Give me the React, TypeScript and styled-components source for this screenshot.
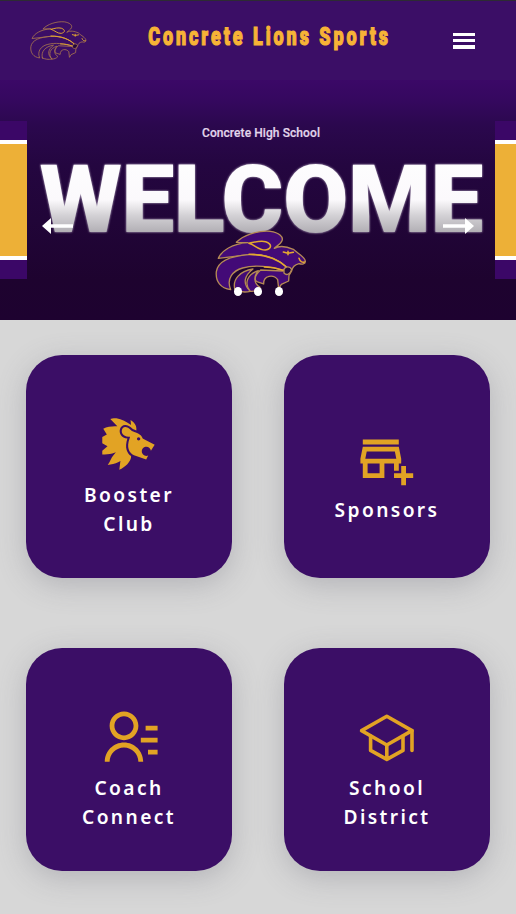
import React from "react";
import styled, { createGlobalStyle } from "styled-components";
import { GiLion } from "react-icons/gi";
import { MdOutlineAddBusiness } from "react-icons/md";
import { RiContactsLine } from "react-icons/ri";
import { IoSchoolOutline } from "react-icons/io5";
import type { IconType } from "react-icons";

const GlobalStyle = createGlobalStyle`
  *, *::before, *::after { box-sizing: border-box; }
  body { margin: 0; background: #d7d7d7; }
`;

const Page = styled.div`
  height: 914px;
  overflow: hidden;
  background: #d7d7d7;
  font-family: "Noto Sans", sans-serif;
`;

const Header = styled.header`
  display: grid;
  grid-template-columns: 117px minmax(0, 1fr) 106px;
  height: 80px;
  border-top: 1px solid #2d2b33;
  background: #3b0e66;
`;

const LogoSlot = styled.a`
  padding: 20px 0 0 30px;
`;

const TitleSlot = styled.div`
  display: flex;
  justify-content: center;
  padding-top: 17px;
`;

const Title = styled.h1`
  margin: 0;
  font: 900 26.5px/36px Roboto, sans-serif;
  letter-spacing: 4.3px;
  white-space: nowrap;
  color: #f7b336;
  -webkit-text-stroke: 1.2px #f7b336;
  transform: translateX(6px) scaleX(0.68);
`;

const MenuButton = styled.button`
  align-self: start;
  display: flex;
  flex-direction: column;
  gap: 3px;
  width: 22px;
  margin: 32px 0 0 42.5px;
  padding: 0;
  border: 0;
  background: none;
`;

const MenuBar = styled.span`
  width: 22px;
  height: 3.2px;
  background: #fff;
`;

const Hero = styled.section`
  position: relative;
  display: grid;
  grid-template-columns: 27px minmax(0, 1fr) 21px;
  height: 240px;
  background: linear-gradient(#3b0867 0, #35085f 20px, #2b084e 45px, #240640 85px, #210538 140px, #1e032f 200px, #1e0230 100%);
`;

const Ribbon = styled.div`
  height: 158px;
  margin-top: 41px;
  border: solid #3b0767;
  border-width: 19px 0;
  background: #edb037;
  box-shadow: inset 0 4px #fff, inset 0 -4px #fff;
`;

const Banner = styled.div`
  display: flex;
  flex-direction: column;
  align-items: center;
  padding-top: 44px;
`;

const SchoolName = styled.p`
  margin: 0;
  font: 500 12px/18px Roboto, sans-serif;
  letter-spacing: 0.08px;
  color: #e2d6eb;
  -webkit-text-stroke: 0.2px #e2d6eb;
`;

const Welcome = styled.h2`
  margin: 2px 0 0;
  font: 900 95px/112px Roboto, sans-serif;
  letter-spacing: -0.8px;
  white-space: nowrap;
  color: transparent;
  background: linear-gradient(#fff 0, #fbf9fc 56px, #d2d0d4 72px, #aaa7ad 92px);
  background-clip: text;
  filter: drop-shadow(0 0 0.8px #cabfd2);
`;

const Mascot = styled.div`
  position: relative;
  margin: -26px 0 0;
  height: 70px;
`;

const ArrowButton = styled.button<{ $side: "left" | "right" }>`
  position: absolute;
  top: 137px;
  ${(p) => p.$side}: 42px;
  width: 31px;
  height: 18px;
  padding: 0;
  border: 0;
  background: none;
  color: #fff;
  transform: ${(p) => (p.$side === "right" ? "scaleX(-1)" : "none")};
  svg { display: block; }
`;

const Dots = styled.div`
  position: absolute;
  left: 0;
  right: 0;
  top: 207px;
  display: flex;
  justify-content: center;
  gap: 12.5px;
`;

const Dot = styled.span`
  width: 8px;
  height: 8.5px;
  border-radius: 50%;
  background: #fff;
`;

const CardGrid = styled.main`
  display: grid;
  grid-template-columns: 206px 206px;
  grid-auto-rows: 223.5px;
  gap: 69.3px 52px;
  padding: 34.8px 26px;
`;

const Card = styled.a`
  display: flex;
  flex-direction: column;
  align-items: center;
  justify-content: center;
  padding-top: 21px;
  border-radius: 36px;
  background: #3b0e66;
  box-shadow: 0 7px 29px rgba(100, 100, 111, 0.3);
  color: #e2a324;
  svg { display: block; font-size: 57.6px; }
`;

const CardLabel = styled.span`
  width: 130px;
  margin-top: 7px;
  font-size: 19.2px;
  font-weight: 600;
  line-height: 29px;
  letter-spacing: 2.4px;
  text-align: center;
  color: #fff;
`;

const tiles: { label: string; icon: IconType }[] = [
  { label: "Booster Club", icon: GiLion },
  { label: "Sponsors", icon: MdOutlineAddBusiness },
  { label: "Coach Connect", icon: RiContactsLine },
  { label: "School District", icon: IoSchoolOutline },
];

function LionHead({ width, fill, stroke, line }: { width: number; fill: string; stroke: string; line: number }) {
  return (
    <svg width={width} height={(width * 188) / 276} viewBox="28 28 276 188" fill="none" strokeLinejoin="round" strokeLinecap="round">
      <g fill={fill} stroke={stroke} strokeWidth={line}>
        <path d="M92 65C112 44 154 29 194 32C220 36 234 48 229 60C225 70 213 76 206 83C224 73 242 77 263 86C276 99 297 108 299 121C300 131 288 132 280 129C268 132 260 138 258 151L250 164L249 181L227 191L219 204L216 177C204 160 173 163 174 190L160 185C143 183 145 165 165 148L232 151L241 139C210 109 166 99 130 102L38 113C47 90 80 69 127 66Z" />
        <path d="M130 102C77 106 37 119 32 153C29 183 45 203 75 207C61 174 82 150 111 142C151 131 194 138 232 149L242 138C211 110 169 101 130 102Z" />
        <path d="M88 207C79 177 102 151 142 145C115 166 110 189 134 212C118 216 100 213 88 207Z" />
        <path d="M134 212C113 188 126 160 158 150C144 166 143 188 163 200C155 209 146 213 134 212Z" />
      </g>
      <g stroke="#e5a92f" strokeWidth={line + 0.6}>
        <path d="M130 68C151 63 164 59 180 63C201 71 198 84 179 88C160 89 151 75 130 68" />
        <path d="M130 101C181 101 218 117 242 139M176 139C198 139 216 143 232 149" />
        <path d="M233 94L247 98L263 95M247 92V102M280 113C283 122 290 126 296 124" />
      </g>
      <path d="M235 146C240 136 253 137 258 146C254 161 243 166 235 157Z" fill="#24063d" stroke={stroke} strokeWidth={line} />
    </svg>
  );
}

function Arrow() {
  return (
    <svg width="31" height="18" viewBox="0 0 31 18" fill="currentColor">
      <path d="M0 9L9 1V7.2H31V10.8H9V17Z" />
    </svg>
  );
}

export default function App() {
  return (
    <Page>
      <GlobalStyle />
      <Header>
        <LogoSlot aria-label="Home">
          <LionHead width={57} fill="none" stroke="#a8754f" line={4} />
        </LogoSlot>
        <TitleSlot>
          <Title>Concrete Lions Sports</Title>
        </TitleSlot>
        <MenuButton aria-label="Menu">
          <MenuBar />
          <MenuBar />
          <MenuBar />
        </MenuButton>
      </Header>
      <Hero>
        <Ribbon />
        <Banner>
          <SchoolName>Concrete High School</SchoolName>
          <Welcome>WELCOME</Welcome>
          <Mascot>
            <LionHead width={92} fill="#430a77" stroke="#b58a55" line={4} />
          </Mascot>
        </Banner>
        <Ribbon />
        <ArrowButton $side="left" aria-label="Previous">
          <Arrow />
        </ArrowButton>
        <ArrowButton $side="right" aria-label="Next">
          <Arrow />
        </ArrowButton>
        <Dots>
          <Dot />
          <Dot />
          <Dot />
        </Dots>
      </Hero>
      <CardGrid>
        {tiles.map(({ label, icon: Icon }) => (
          <Card key={label}>
            <Icon />
            <CardLabel>{label}</CardLabel>
          </Card>
        ))}
      </CardGrid>
    </Page>
  );
}
